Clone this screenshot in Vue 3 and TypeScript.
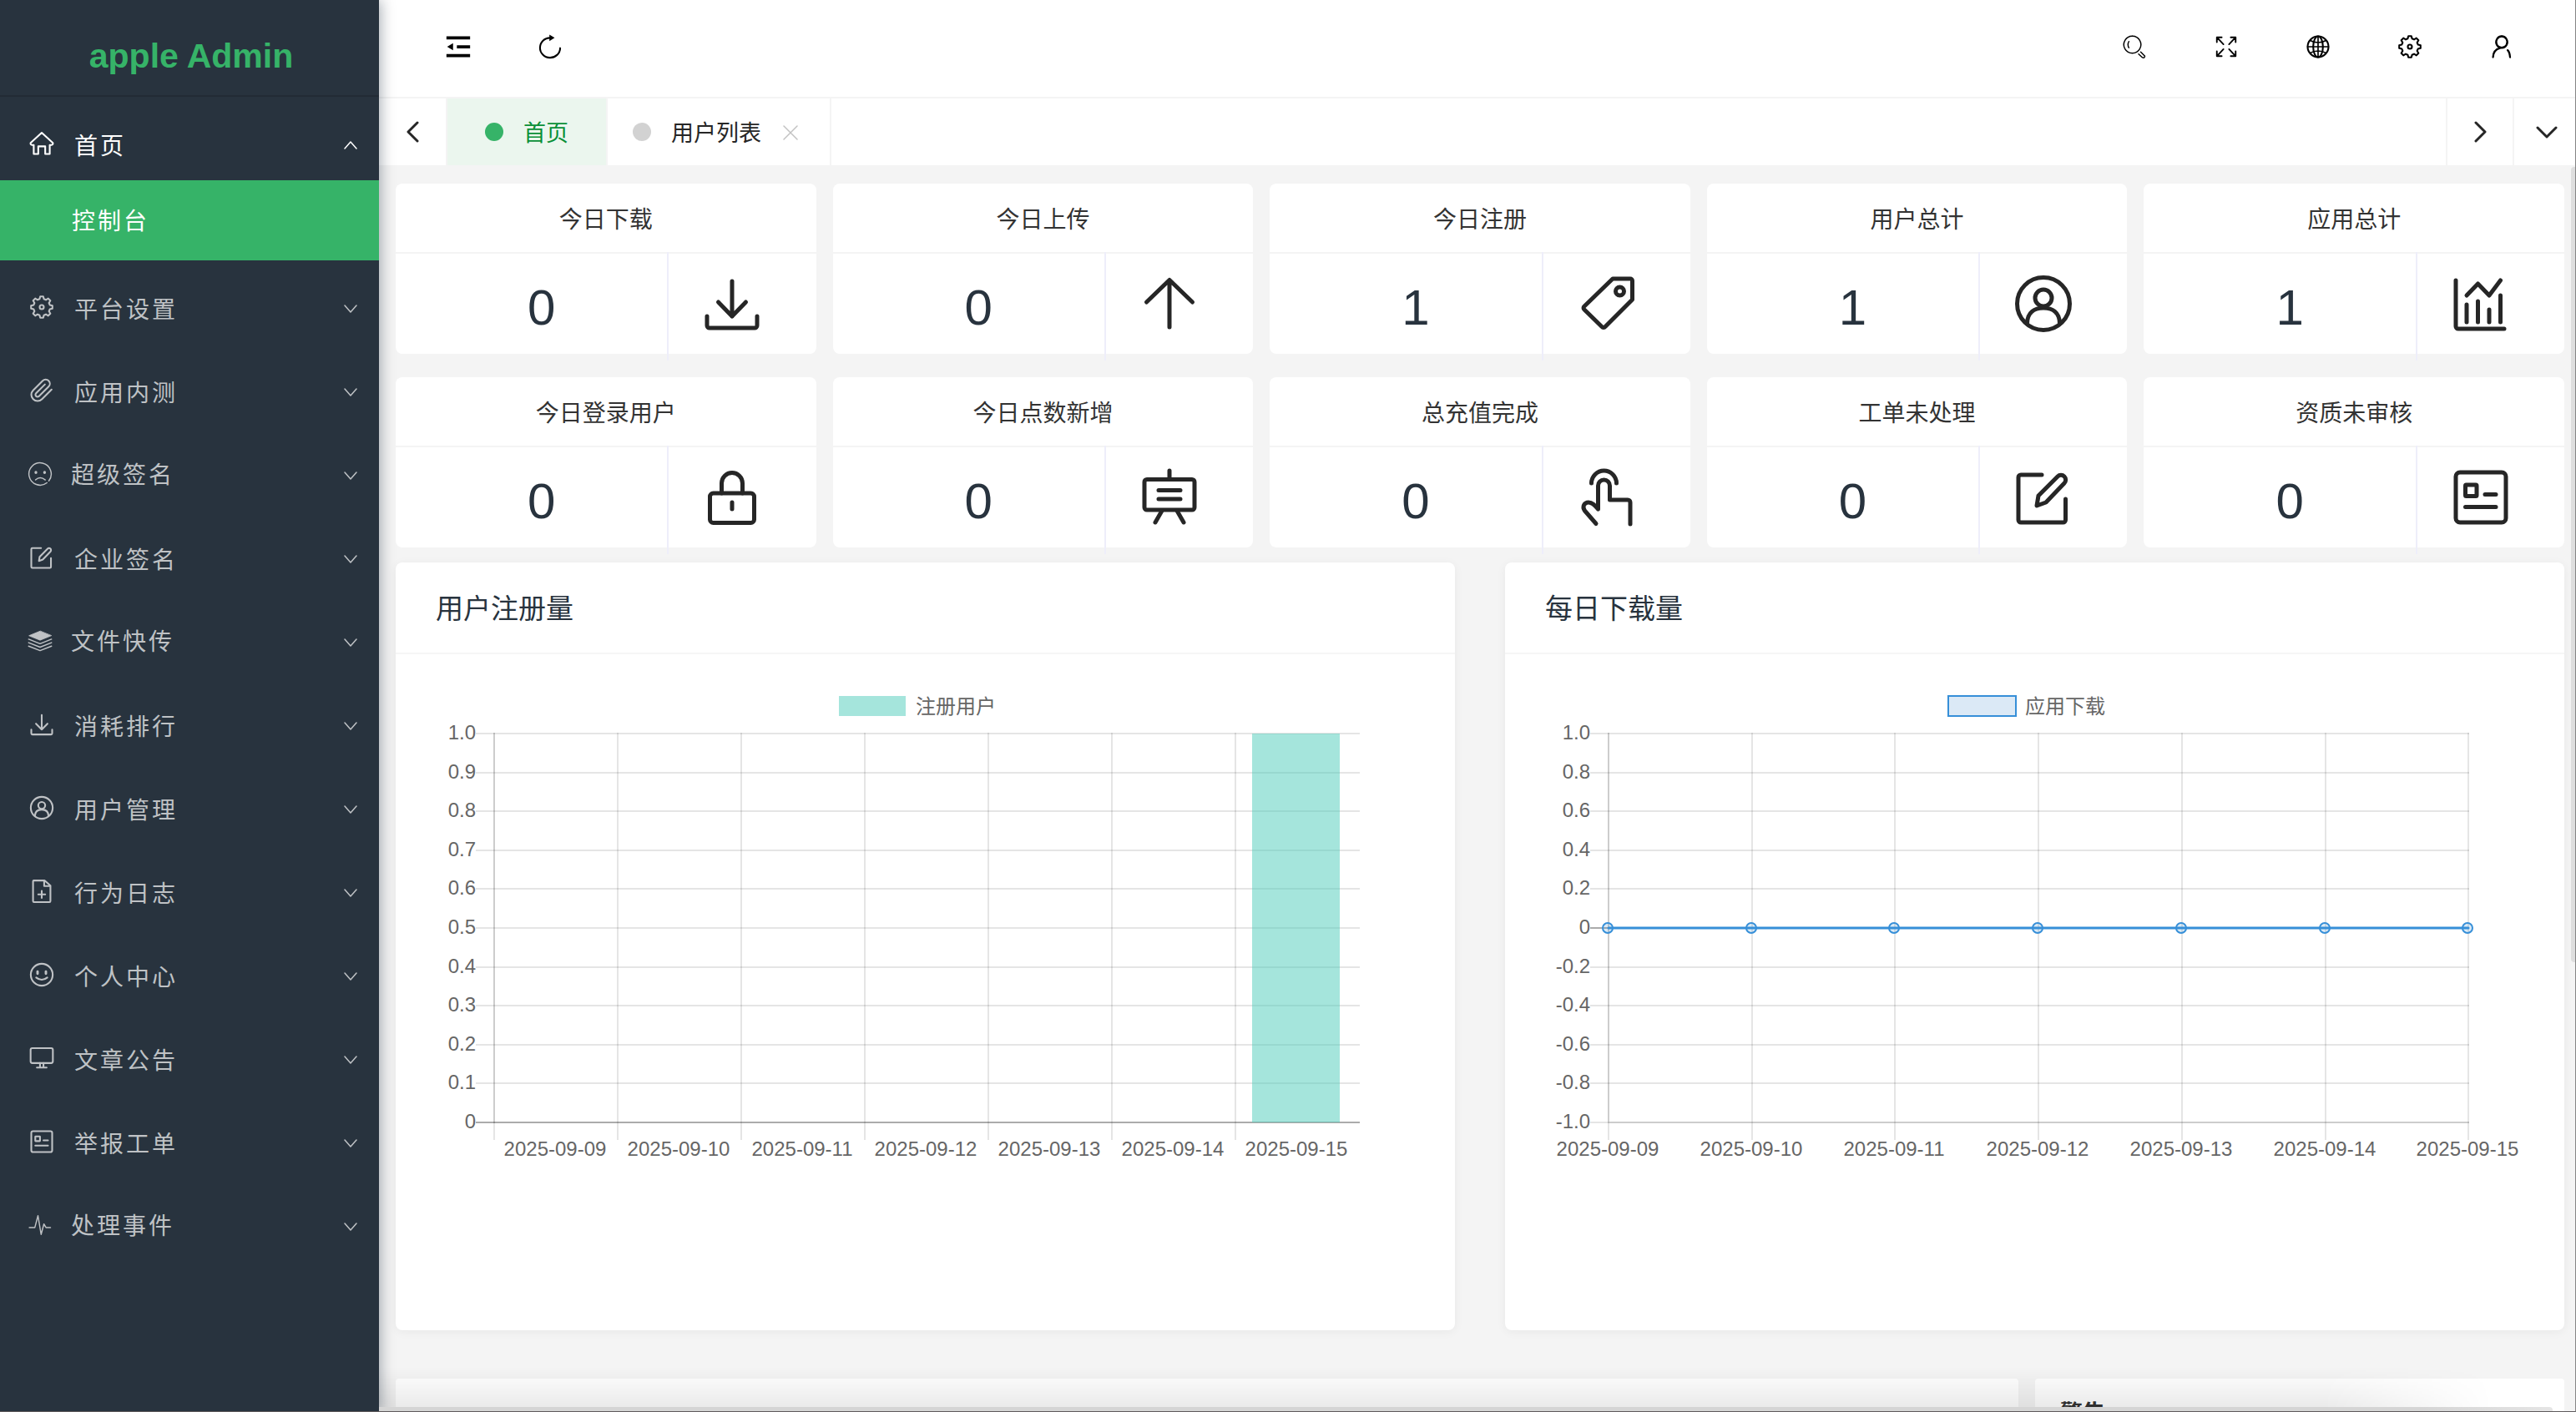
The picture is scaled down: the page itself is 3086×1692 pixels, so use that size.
<script setup lang="ts">
interface MenuItem {
  label: string
  icon: string
  compact?: boolean
}

interface Stat {
  label: string
  value: number
  icon: string
}

// Eight-toothed cog outline on the shared 72 x 72 icon grid.
function cogPath(): string {
  const points: string[] = []
  for (let tooth = 0; tooth < 8; tooth++) {
    const centre = tooth * 45 - 90
    const profile: [number, number][] = [[-15, 24], [-8, 31], [8, 31], [15, 24]]
    for (const [offset, radius] of profile) {
      const a = ((centre + offset) * Math.PI) / 180
      points.push(`${(36 + radius * Math.cos(a)).toFixed(1)} ${(36 + radius * Math.sin(a)).toFixed(1)}`)
    }
  }
  return `M${points.join('L')}Z`
}

const icons: Record<string, string> = {
  home: '<path d="M36 5 4 34q-1 6 4 6h5v26h13V44h20v22h13V40h5q5 0 4-6z"/>',
  gear: `<path d="${cogPath()}"/><circle cx="36" cy="36" r="6"/>`,
  clip: '<path d="M64.3 33.2 36.8 60.7a18 18 0 0 1-25.5-25.5L38.8 7.7a12 12 0 0 1 17 17L28.2 52.2a6 6 0 0 1-8.5-8.5L45.2 18.3"/>',
  sad: '<path stroke-width="3.5" d="M61.2 55.7A32 32 0 1 0 55.7 61.2M23 53q13-12 28 0"/><path stroke-width="8" d="M24 31v1M49 31v1"/>',
  edit: '<path d="M34 9H9a3 3 0 0 0-3 3v51a3 3 0 0 0 3 3h50.5a3 3 0 0 0 3-3V38"/><path d="M28 46l2-12L53 11a5.5 5.5 0 0 1 8 8L39 42z"/>',
  layers: '<path d="M36 8 4 21l32 13 32-13z" fill="currentColor" stroke-width="2"/><path stroke-width="3.5" d="M3 31l33 13 33-13M3 41l33 13 33-13M3 51l33 13 33-13"/>',
  download: '<path d="M36 9v42M19.5 34 36 51l16.5-17M6 51v11a3 3 0 0 0 3 3h54a3 3 0 0 0 3-3V51"/>',
  user: '<circle cx="36" cy="36" r="31.5"/><circle cx="36" cy="29" r="10"/><path d="M16.5 60C16.5 46 26 41 36 41s19.5 5 19.5 19"/>',
  file: '<path d="M13 5h31l17 15v44a3 3 0 0 1-3 3H14a3 3 0 0 1-3-3V8a3 3 0 0 1 2-3zM43 6v15h17M36 35v20M26 45h20"/>',
  smile: '<circle cx="36" cy="36" r="31.5"/><path d="M24 27v6M48 27v6" stroke-width="7"/><path d="M20 44q16 13 32 0"/>',
  monitor: '<rect x="4" y="7" width="64" height="43" rx="5"/><path d="M31 50v12M41 50v12M22 63h28"/>',
  report: '<rect x="6" y="6" width="60" height="60" rx="5"/><rect x="17.5" y="21" width="13.5" height="13.5" rx="1"/><path d="M41 32.5h13M17.5 47.5h36.5"/>',
  pulse: '<path stroke-width="3.5" d="M5 43h16l9-34 9 54 8-30 6 10h13"/>',
  up: '<path d="M36 8v56M8.5 34 36 7.5 63.5 34"/>',
  tag: '<path d="M43 6h21a2.5 2.5 0 0 1 2.5 2.5V31L34 63.5a2.5 2.5 0 0 1-4 0L9 43a2.5 2.5 0 0 1 0-4z"/><circle cx="51.5" cy="21" r="5"/>',
  chart: '<path d="M6 8v55a3 3 0 0 0 3 3h55M19 37v21M32.5 33v25M46 43v15M59.5 26v32M19 26l13.5-14L46 26 59.5 8"/>',
  lock: '<rect x="9.5" y="31" width="53" height="35.5" rx="4"/><path d="M23.5 31V19a12.5 12.5 0 0 1 25 0v12M36 42v8"/>',
  board: '<rect x="6" y="14.5" width="60" height="36.5" rx="3"/><path d="M36 4v10M23 27.5h26M23 38h26M27 52l-8 14M45 52l8 14"/>',
  tap: '<path d="M17.5 19a15 15 0 0 1 30 0M25.5 50V22a7 7 0 0 1 14 0v17H61a3 3 0 0 1 3 3v26M23 67.5 9.5 52C6 47 9 42 14 42c5 0 8 4 11.5 8"/>',
  menu: '<path stroke="none" fill="currentColor" d="M2 6h68v9H2zM32 31.5h38v9H32zM2 57h68v9H2zM4 36l17-10v20z"/>',
  refresh: '<path d="M36 10.5A29 28.5 0 1 0 65 40"/><path stroke="none" fill="currentColor" d="M34 1l15 9-15 10z"/>',
  search: '<path stroke-width="3.5" d="M30 5.5a24.5 24.5 0 1 0 .1 0M20 21q-5 9 0 18M48 57l11 10q6 3 7-4L54 51"/>',
  full: '<path stroke-width="4.5" d="M28 29 10 10M44 29 62 10M28 43 10 62M44 43l18 19M9 23V9h14M49 9h14v14M9 49v14h14M49 63h14V49"/>',
  globe: '<circle cx="36" cy="36" r="30"/><ellipse cx="36" cy="36" rx="14" ry="30"/><path stroke-width="4" d="M36 6v60M6 36h60M13 18q23 12 46 0M13 54q23-12 46 0"/>',
  person: '<path stroke-width="5.5" d="M36 6a16 16.5 0 1 0 .1 0M11 66q1-21 20-26M53 46q6 6 7 20"/>',
}

const menu: MenuItem[] = [
  { label: '平台设置', icon: 'gear' },
  { label: '应用内测', icon: 'clip' },
  { label: '超级签名', icon: 'sad', compact: true },
  { label: '企业签名', icon: 'edit' },
  { label: '文件快传', icon: 'layers', compact: true },
  { label: '消耗排行', icon: 'download' },
  { label: '用户管理', icon: 'user' },
  { label: '行为日志', icon: 'file' },
  { label: '个人中心', icon: 'smile' },
  { label: '文章公告', icon: 'monitor' },
  { label: '举报工单', icon: 'report' },
  { label: '处理事件', icon: 'pulse', compact: true },
]

const tools = [
  { label: '搜索', icon: 'search' },
  { label: '全屏', icon: 'full' },
  { label: '语言', icon: 'globe' },
  { label: '设置', icon: 'gear' },
  { label: '账户', icon: 'person' },
]

const stats: Stat[] = [
  { label: '今日下载', value: 0, icon: 'download' },
  { label: '今日上传', value: 0, icon: 'up' },
  { label: '今日注册', value: 1, icon: 'tag' },
  { label: '用户总计', value: 1, icon: 'user' },
  { label: '应用总计', value: 1, icon: 'chart' },
  { label: '今日登录用户', value: 0, icon: 'lock' },
  { label: '今日点数新增', value: 0, icon: 'board' },
  { label: '总充值完成', value: 0, icon: 'tap' },
  { label: '工单未处理', value: 0, icon: 'edit' },
  { label: '资质未审核', value: 0, icon: 'report' },
]

const days = ['2025-09-09', '2025-09-10', '2025-09-11', '2025-09-12', '2025-09-13', '2025-09-14', '2025-09-15']
const barTicks = ['1.0', '0.9', '0.8', '0.7', '0.6', '0.5', '0.4', '0.3', '0.2', '0.1', '0']
const lineTicks = ['1.0', '0.8', '0.6', '0.4', '0.2', '0', '-0.2', '-0.4', '-0.6', '-0.8', '-1.0']
const registered = [0, 0, 0, 0, 0, 0, 1]

const top = 95
const plotHeight = 466
const rowY = (i: number) => Math.round(top + (plotHeight / 10) * i)
const barX = (i: number) => 118 + 148 * i
const lineX = (i: number) => Math.round(124 + 171.7 * i)
</script>

<template>
  <div class="layout">
    <aside class="side">
      <h1 class="logo">apple Admin</h1>
      <nav class="nav">
        <button type="button" class="item open">
          <span class="item-icon"><svg viewBox="0 0 72 72" v-html="icons.home" /></span>
          <span class="item-label">首页</span>
          <svg class="arrow" viewBox="0 0 16 10"><path d="M1 9l7-8 7 8" /></svg>
        </button>
        <a href="#console" class="sub">控制台</a>
        <button v-for="m in menu" :key="m.label" type="button" class="item" :class="{ compact: m.compact }">
          <span class="item-icon"><svg viewBox="0 0 72 72" v-html="icons[m.icon]" /></span>
          <span class="item-label">{{ m.label }}</span>
          <svg class="arrow" viewBox="0 0 16 10"><path d="M1 1l7 8 7-8" /></svg>
        </button>
      </nav>
    </aside>

    <div class="body">
      <header class="header">
        <div class="tools">
          <button type="button" class="tool" aria-label="收起菜单"><svg viewBox="0 0 72 72" v-html="icons.menu" /></button>
          <button type="button" class="tool" aria-label="刷新"><svg viewBox="0 0 72 72" v-html="icons.refresh" /></button>
        </div>
        <div class="tools">
          <button v-for="t in tools" :key="t.label" type="button" class="tool" :aria-label="t.label">
            <svg viewBox="0 0 72 72" v-html="icons[t.icon]" />
          </button>
        </div>
      </header>

      <div class="tabs">
        <button type="button" class="step first" aria-label="上一个">
          <svg viewBox="0 0 26 26"><path d="M19 2 8 13l11 11" /></svg>
        </button>
        <div class="tab active"><i class="dot" /><a href="#home">首页</a></div>
        <div class="tab">
          <i class="dot" /><a href="#users">用户列表</a>
          <button type="button" class="close" aria-label="关闭"><svg viewBox="0 0 18 18"><path d="M1 1l16 16M17 1 1 17" /></svg></button>
        </div>
        <div class="spacer" />
        <button type="button" class="step" aria-label="下一个">
          <svg viewBox="0 0 26 26"><path d="M8 2l11 11L8 24" /></svg>
        </button>
        <button type="button" class="step last" aria-label="更多">
          <svg viewBox="0 0 26 26"><path d="M2 8l11 11L24 8" /></svg>
        </button>
      </div>

      <main class="content">
        <section class="stats">
          <article v-for="s in stats" :key="s.label" class="stat">
            <h2>{{ s.label }}</h2>
            <div class="stat-row">
              <div class="stat-value">{{ s.value }}</div>
              <div class="stat-icon"><svg viewBox="0 0 72 72" v-html="icons[s.icon]" /></div>
            </div>
          </article>
        </section>

        <section class="charts">
          <article class="card">
            <h2>用户注册量</h2>
            <svg class="chart" viewBox="0 0 1269 810">
              <rect x="531" y="50" width="80" height="24" class="bar" />
              <text x="623" y="71">注册用户</text>
              <g v-for="(t, i) in barTicks" :key="t">
                <path :d="`M96 ${rowY(i)}H1155`" class="grid" />
                <text x="96" :y="rowY(i) + 7" text-anchor="end">{{ t }}</text>
              </g>
              <path v-for="i in 7" :key="i" :d="`M${barX(i - 1)} 94V582`" class="grid" />
              <path d="M118 94V562" class="grid" />
              <path d="M96 561H1155" class="zero" />
              <template v-for="(d, i) in days" :key="d">
                <rect
                  v-if="registered[i]"
                  :x="barX(i) + 20"
                  :y="561 - plotHeight * registered[i]"
                  width="105"
                  :height="plotHeight * registered[i]"
                  class="bar"
                />
                <text :x="barX(i) + 73" y="601" text-anchor="middle">{{ d }}</text>
              </template>
            </svg>
          </article>

          <article class="card">
            <h2>每日下载量</h2>
            <svg class="chart" viewBox="0 0 1269 810">
              <rect x="531" y="50" width="81" height="24" class="swatch" />
              <text x="623" y="71">应用下载</text>
              <g v-for="(t, i) in lineTicks" :key="t">
                <path :d="`M102 ${rowY(i)}H1155`" class="grid" />
                <text x="102" :y="rowY(i) + 7" text-anchor="end">{{ t }}</text>
              </g>
              <path v-for="i in 7" :key="i" :d="`M${lineX(i - 1)} 94V582`" class="grid" />
              <path d="M124 94V562M124 561H1155" class="grid" />
              <path d="M102 328H1155" class="zero" />
              <path d="M124 328H1154" class="line" />
              <template v-for="(d, i) in days" :key="d">
                <circle :cx="lineX(i) - 1" cy="328" r="6" class="point" />
                <text :x="lineX(i) - 1" y="601" text-anchor="middle">{{ d }}</text>
              </template>
            </svg>
          </article>
        </section>

        <section class="notices">
          <article class="notice" />
          <article class="notice"><h2>警告</h2></article>
        </section>
      </main>
    </div>

    <div class="scroll-thumb" />
    <div class="bottom-shade" />
    <div class="bottom-bar" />
    <div class="edge" />
  </div>
</template>

<style>
body {
  margin: 0;
}
</style>

<style scoped>
.layout {
  position: relative;
  display: flex;
  height: 100vh;
  overflow: hidden;
  background: #f4f4f4;
  font-family: "Liberation Sans", "Noto Sans CJK SC", sans-serif;
  color: #333;
}
h1,
h2 {
  margin: 0;
  font-weight: 400;
}
button {
  margin: 0;
  padding: 0;
  border: 0;
  background: none;
  color: inherit;
  font: inherit;
  cursor: pointer;
}
a {
  color: inherit;
  text-decoration: none;
}
svg {
  display: block;
  fill: none;
  stroke: currentColor;
  stroke-width: 5;
  stroke-linecap: round;
  stroke-linejoin: round;
}

.side {
  position: relative;
  z-index: 2;
  flex: 0 0 454px;
  background: #28333e;
  box-shadow: 2px 0 16px rgba(0, 21, 41, 0.35);
}
.logo {
  box-sizing: border-box;
  height: 116px;
  padding-top: 8px;
  padding-left: 4px;
  border-bottom: 2px solid #222b35;
  line-height: 118px;
  text-align: center;
  font-size: 41px;
  font-weight: 700;
  color: #36b368;
}
.nav {
  display: flex;
  flex-direction: column;
}
.item {
  display: flex;
  align-items: center;
  height: 84px;
  margin-top: 16px;
  padding: 0 26px 0 34px;
  color: #bfc2c5;
  text-align: left;
}
.item.open {
  color: #fff;
}
.item-icon {
  display: flex;
  justify-content: center;
  width: 32px;
  margin-right: 23px;
  padding-bottom: 4px;
}
.compact .item-icon {
  width: 28px;
}
.item-icon svg {
  flex: 0 0 30px;
  height: 30px;
}
.item-label {
  flex: 1;
  padding-top: 4px;
  font-size: 28px;
  letter-spacing: 3px;
  line-height: 40px;
}
.compact .item-label {
  padding-top: 0;
}
.arrow {
  width: 16px;
  height: 10px;
  stroke-width: 1.5;
}
.sub {
  height: 96px;
  padding-left: 86px;
  background: #36b368;
  color: #fff;
  font-size: 28px;
  letter-spacing: 3px;
  line-height: 100px;
}

.body {
  flex: 1;
  min-width: 0;
}
.header {
  display: flex;
  justify-content: space-between;
  height: 116px;
  padding: 0 34px 0 40px;
  border-bottom: 2px solid #f4f4f4;
  background: #fff;
  color: #000;
}
.tools {
  display: flex;
}
.tool {
  display: flex;
  align-items: center;
  justify-content: center;
  width: 110px;
  height: 112px;
}
.tool svg {
  width: 30px;
  height: 30px;
}
.tabs {
  display: flex;
  height: 80px;
  background: #fff;
  color: #262626;
}
.step {
  display: flex;
  align-items: center;
  justify-content: center;
  box-sizing: border-box;
  width: 80px;
  border-left: 2px solid #f4f4f4;
}
.step.first {
  width: 82px;
  border-left: 0;
  border-right: 2px solid #f4f4f4;
}
.step.last {
  width: 76px;
  padding-left: 4px;
}
.step svg {
  width: 26px;
  height: 26px;
  stroke-width: 3;
}
.tab {
  display: flex;
  align-items: center;
  padding: 0 38px 0 30px;
  border-right: 2px solid #f4f4f4;
  font-size: 27px;
  line-height: 76px;
}
.tab a {
  padding-top: 4px;
}
.tab.active {
  padding: 0 45px;
  background: #ebf6ee;
  color: #0a9038;
}
.dot {
  width: 22px;
  height: 22px;
  margin-right: 24px;
  border-radius: 50%;
  background: #d2d2d2;
}
.active .dot {
  background: #36b368;
}
.close {
  margin-left: 26px;
  padding-top: 2px;
  color: #c2c2c2;
}
.close svg {
  width: 18px;
  height: 18px;
  stroke-width: 1.5;
}
.spacer {
  flex: 1;
}

.content {
  padding: 22px 14px 0 20px;
}
.stats {
  display: grid;
  grid-template-columns: repeat(5, 1fr);
  gap: 28px 20px;
}
.stat {
  height: 204px;
  border-radius: 8px;
  background: #fff;
}
.stat h2 {
  height: 82px;
  border-bottom: 2px solid #f4f4f4;
  line-height: 87px;
  text-align: center;
  font-size: 28px;
}
.stat-row {
  display: flex;
  height: 130px;
  margin-top: -2px;
}
.stat-value {
  box-sizing: border-box;
  width: 65%;
  height: 130px;
  padding-left: 24px;
  border-right: 2px solid #eeeefa;
  line-height: 133px;
  text-align: center;
  font-size: 60px;
  color: #28333e;
}
.stat-icon {
  display: flex;
  justify-content: center;
  width: 35%;
  padding: 26px 24px 0 0;
  box-sizing: border-box;
  color: #262626;
}
.stat-icon svg {
  width: 72px;
  height: 72px;
}

.charts {
  display: grid;
  grid-template-columns: 1fr 1fr;
  gap: 60px;
  margin-top: 18px;
}
.card {
  border-radius: 8px;
  background: #fff;
  box-shadow: 0 2px 12px rgba(0, 0, 0, 0.05);
}
.card h2 {
  height: 108px;
  padding-left: 48px;
  border-bottom: 2px solid #f6f6f6;
  line-height: 111px;
  font-size: 33px;
  color: #28333e;
}
.chart {
  width: 100%;
  font-size: 24px;
  stroke: none;
}
.chart text {
  fill: #666;
}
.grid {
  stroke: rgba(0, 0, 0, 0.1);
  stroke-width: 2;
  stroke-linecap: butt;
}
.zero {
  stroke: rgba(0, 0, 0, 0.25);
  stroke-width: 2;
  stroke-linecap: butt;
}
.bar {
  fill: rgba(75, 203, 185, 0.5);
}
.swatch {
  fill: #dbe9f6;
  stroke: #368fd8;
  stroke-width: 2;
  stroke-linejoin: miter;
}
.line {
  stroke: #368fd8;
  stroke-width: 3;
}
.point {
  fill: rgba(54, 143, 216, 0.18);
  stroke: #368fd8;
  stroke-width: 2;
}

.notices {
  display: grid;
  grid-template-columns: 1944fr 634fr;
  gap: 20px;
  margin-top: 58px;
}
.notice {
  height: 300px;
  border-radius: 4px;
  background: #fff;
}
.notice h2 {
  padding: 20px 0 0 30px;
  font-size: 27px;
  font-weight: 700;
  line-height: 44px;
}

.scroll-thumb {
  position: absolute;
  top: 200px;
  right: 1px;
  width: 5px;
  height: 953px;
  border-radius: 4px 0 0 4px;
  background: #dedede;
}
.bottom-shade {
  position: absolute;
  bottom: 0;
  left: 454px;
  right: 100px;
  height: 54px;
  background: linear-gradient(to bottom, rgba(0, 0, 0, 0), rgba(0, 0, 0, 0.09));
  mask-image: linear-gradient(to right, #000 92%, transparent);
}
.bottom-bar {
  position: absolute;
  z-index: 3;
  bottom: 0;
  left: 454px;
  right: 28px;
  height: 6px;
  border-radius: 0 4px 0 0;
  background: linear-gradient(to right, #d5d5d5 94%, #e5e5e5);
}
.edge {
  position: absolute;
  z-index: 4;
  inset: 0;
  border-right: 1px solid #858585;
  border-bottom: 1px solid #5f5b5d;
  pointer-events: none;
}
</style>
